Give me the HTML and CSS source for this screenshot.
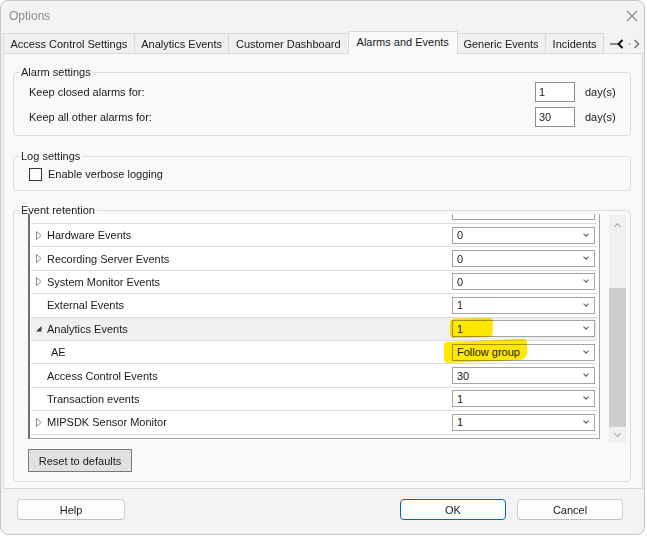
FILE: index.html
```html
<!DOCTYPE html>
<html lang="en">

<head>
    <meta charset="UTF-8">
    <title>Options</title>
    <link rel="stylesheet" href="styles.css">
</head>

<body>
    <div class="window">
        <div class="titlebar">
            <span class="title">Options</span>
            <svg class="close" width="12" height="12" viewBox="0 0 12 12">
                <path d="M1 1L11 11M11 1L1 11" stroke="#8a8a8a" stroke-width="1.1" fill="none" />
            </svg>
        </div>

        <div class="tabs">
            <div class="tab">Access Control Settings</div>
            <div class="tab">Analytics Events</div>
            <div class="tab">Customer Dashboard</div>
            <div class="tab active">Alarms and Events</div>
            <div class="tab">Generic Events</div>
            <div class="tab">Incidents</div>
            <div class="tab-scroll">
                <svg width="32" height="16" viewBox="0 0 32 16">
                    <path d="M1 8H11" stroke="#6a6a6a" stroke-width="1.5" />
                    <path d="M13.5 4L9.5 8L13.5 12" stroke="#111" stroke-width="2" fill="none" />
                    <circle cx="20.5" cy="8" r="0.8" fill="#888" />
                    <path d="M25.5 4L29.5 8L25.5 12" stroke="#777" stroke-width="1.6" fill="none" />
                </svg>
            </div>
        </div>

        <div class="tab-page">
            <fieldset class="group alarms">
                <legend>Alarm settings</legend>
                <div class="group-body">
                    <div class="field-row">
                        <span class="label">Keep closed alarms for:</span>
                        <input class="num" type="text" value="1">
                        <span class="unit">day(s)</span>
                    </div>
                    <div class="field-row">
                        <span class="label">Keep all other alarms for:</span>
                        <input class="num" type="text" value="30">
                        <span class="unit">day(s)</span>
                    </div>
                </div>
            </fieldset>

            <fieldset class="group log">
                <legend>Log settings</legend>
                <div class="group-body">
                    <label class="check"><span class="box"></span>Enable verbose logging</label>
                </div>
            </fieldset>

            <fieldset class="group retention">
                <legend>Event retention</legend>
                <div class="group-body">
                    <div class="grid-wrap">
                        <div class="grid">
                            <div class="rows">
                                <div class="row">
                                    <span class="name"></span>
                                    <div class="combo"></div>
                                </div>
                                <div class="row">
                                    <span class="name"><svg class="tri" width="6" height="9" viewBox="0 0 6 9"><path d="M0.5 0.5L5 4.5L0.5 8.5Z" fill="none" stroke="#8c8c8c" /></svg>Hardware Events</span>
                                    <div class="combo">0</div>
                                </div>
                                <div class="row">
                                    <span class="name"><svg class="tri" width="6" height="9" viewBox="0 0 6 9"><path d="M0.5 0.5L5 4.5L0.5 8.5Z" fill="none" stroke="#8c8c8c" /></svg>Recording Server Events</span>
                                    <div class="combo">0</div>
                                </div>
                                <div class="row">
                                    <span class="name"><svg class="tri" width="6" height="9" viewBox="0 0 6 9"><path d="M0.5 0.5L5 4.5L0.5 8.5Z" fill="none" stroke="#8c8c8c" /></svg>System Monitor Events</span>
                                    <div class="combo">0</div>
                                </div>
                                <div class="row">
                                    <span class="name">External Events</span>
                                    <div class="combo">1</div>
                                </div>
                                <div class="row expanded">
                                    <span class="name"><svg class="tri" width="6" height="9" viewBox="0 0 6 9"><path d="M5.5 2L5.5 7.5L0 7.5Z" fill="#3c3c3c" /></svg>Analytics Events</span>
                                    <div class="combo">1
                                        <svg class="marker m1" width="43" height="20" viewBox="0 0 43 20">
                                            <path d="M0 5Q0 1 5 0.5L39 0Q43 0 43 4L42.5 16Q42 19 38 19L4 20Q0 20 0 16Z" fill="#ffe800" />
                                        </svg>
                                    </div>
                                </div>
                                <div class="row">
                                    <span class="name sub">AE</span>
                                    <div class="combo">Follow group
                                        <svg class="marker m2" width="83" height="24" viewBox="0 0 83 24">
                                            <path d="M0 6Q0 3 4 3L79 0Q83 0 83 3L83 14Q82 20 76 21L4 24Q0 24 0 20Z" fill="#ffe800" />
                                        </svg>
                                    </div>
                                </div>
                                <div class="row">
                                    <span class="name">Access Control Events</span>
                                    <div class="combo">30</div>
                                </div>
                                <div class="row">
                                    <span class="name">Transaction events</span>
                                    <div class="combo">1</div>
                                </div>
                                <div class="row">
                                    <span class="name"><svg class="tri" width="6" height="9" viewBox="0 0 6 9"><path d="M0.5 0.5L5 4.5L0.5 8.5Z" fill="none" stroke="#8c8c8c" /></svg>MIPSDK Sensor Monitor</span>
                                    <div class="combo">1</div>
                                </div>
                            </div>
                        </div>

                        <div class="vscroll">
                            <div class="arrow up"></div>
                            <div class="track"><div class="thumb"></div></div>
                            <div class="arrow down"></div>
                        </div>
                    </div>
                    <button class="reset">Reset to defaults</button>
                </div>
            </fieldset>
        </div>

        <div class="footer">
            <button class="dlg">Help</button>
            <button class="dlg ok">OK</button>
            <button class="dlg">Cancel</button>
        </div>
    </div>
</body>

</html>
```

FILE: styles.css
```css
body {
    margin: 0;
    background-color: #fff;
    font-family: "Liberation Sans", Arial, sans-serif;
    font-size: 11px;
    color: #1a1a1a;
}

.window {
    width: 645px;
    height: 535px;
    box-sizing: border-box;
    border: 1px solid #c6c6c6;
    border-radius: 8px;
    background-color: #f3f3f3;
    overflow: hidden;
}

.titlebar {
    height: 30px;
    display: flex;
    align-items: center;
    padding-left: 8px;
}

.title {
    font-size: 12px;
    color: #8f8f8f;
}

.close {
    margin-left: auto;
    margin-right: 6px;
}

/* tab strip */
.tabs {
    height: 22px;
    display: flex;
    align-items: flex-end;
    padding-left: 2px;
    position: relative;
    z-index: 1;
}

.tab {
    height: 20px;
    box-sizing: border-box;
    padding: 1px 6.5px 0;
    border: 1px solid #d9d9d9;
    border-bottom: none;
    margin-right: -1px;
    background-color: #f0f0f0;
    display: flex;
    align-items: center;
    white-space: nowrap;
}

.tab:nth-child(3) {
    padding-right: 9px;
}

.tab.active {
    height: 23px;
    padding: 0 8px 2px;
    margin: 0 -2px -1px -2px;
    background-color: #f9f9f9;
    position: relative;
}

.tab-scroll {
    align-self: flex-start;
    margin: 5px 3px 0 auto;
    height: 16px;
}

.tab-page {
    height: 436px;
    box-sizing: border-box;
    margin: 0 1px 0 2px;
    padding: 0 11px 0 9px;
    border: 1px solid #d9d9d9;
    background-color: #f9f9f9;
}

/* group boxes */
.group {
    margin: 13px 0 0 0;
    padding: 0;
    min-width: 0;
    border: 1px solid #dcdcdc;
    border-radius: 4px;
}

.group legend {
    margin-left: 5px;
    padding: 0 2px;
    line-height: 13px;
}

.alarms {
    margin-top: 12px;
}

.log {
    margin-top: 14px;
}

.alarms .group-body {
    padding: 3px 10px 8px 15px;
}

.log .group-body {
    padding: 4px 0 9px 15px;
}

.retention .group-body {
    padding: 0 4px 9px 14px;
}

.field-row {
    display: flex;
    align-items: center;
    height: 20px;
    margin-bottom: 5px;
}

.field-row:last-child {
    margin-bottom: 0;
}

.field-row .label {
    flex: 1;
}

.num {
    width: 40px;
    height: 20px;
    box-sizing: border-box;
    padding: 0 3px;
    border: 1px solid #8e8e8e;
    font-family: inherit;
    font-size: 11px;
    color: #1a1a1a;
    outline: none;
}

.unit {
    width: 35px;
    margin-left: 10px;
}

.check {
    display: flex;
    align-items: center;
    height: 14px;
}

.check .box {
    width: 13px;
    height: 13px;
    box-sizing: border-box;
    border: 1px solid #333;
    background-color: #fcfcfc;
    margin-right: 6px;
}

/* event retention grid */
.grid-wrap {
    display: flex;
    align-items: flex-start;
    margin-top: -3px;
}

.grid {
    width: 572px;
    height: 225px;
    box-sizing: border-box;
    border-left: 2px solid #6f6f6f;
    border-right: 1px solid #a3a3a3;
    border-bottom: 1px solid #a3a3a3;
    background-color: #fff;
    overflow: hidden;
}

.rows {
    margin: -13.4px 2px 0 1px;
}

.row {
    height: 23.4px;
    box-sizing: border-box;
    border-bottom: 1px solid #dcdcdc;
    display: flex;
    align-items: center;
}

.row.expanded {
    background-color: #f0f0f0;
}

.name {
    flex: 1;
    display: flex;
    align-items: center;
    padding-left: 16px;
    white-space: nowrap;
}

.name.sub {
    padding-left: 20px;
}

.tri {
    margin-left: -11px;
    margin-right: 5px;
}

.combo {
    width: 143px;
    height: 17px;
    box-sizing: border-box;
    margin-right: 2px;
    padding-left: 4px;
    border: 1px solid #a3a3a3;
    background-color: #fff;
    display: flex;
    align-items: center;
    position: relative;
}

.combo:after {
    content: '';
    position: absolute;
    right: 6px;
    top: 4px;
    width: 3px;
    height: 3px;
    border-right: 1px solid #555;
    border-bottom: 1px solid #555;
    transform: rotate(45deg);
}

.marker {
    position: absolute;
    mix-blend-mode: multiply;
}

.m1 {
    left: -3px;
    top: -3px;
}

.m2 {
    left: -9px;
    top: -6px;
}

.vscroll {
    width: 17px;
    height: 228px;
    margin: 1px 0 0 9px;
    background-color: #f0f0f0;
    display: flex;
    flex-direction: column;
}

.vscroll .arrow {
    height: 16px;
    position: relative;
}

.vscroll .arrow:after {
    content: '';
    position: absolute;
    left: 6px;
    width: 4px;
    height: 4px;
    border-left: 1px solid #a0a0a0;
    border-top: 1px solid #a0a0a0;
}

.vscroll .up:after {
    top: 9px;
    transform: rotate(45deg);
}

.vscroll .down:after {
    top: 4px;
    transform: rotate(225deg);
}

.track {
    flex: 1;
    display: flex;
    flex-direction: column;
    justify-content: flex-end;
}

.thumb {
    height: 139px;
    background-color: #cdcdcd;
}

.reset {
    display: block;
    width: 104px;
    height: 23px;
    margin-top: 6px;
    border: 1px solid #7a7a7a;
    background-color: #e1e1e1;
    font-family: inherit;
    font-size: 11px;
    color: #1a1a1a;
    padding: 0;
}

/* dialog buttons */
.footer {
    display: flex;
    padding: 10px 21px 0 16px;
}

.dlg {
    height: 21px;
    width: 106px;
    padding: 0;
    border: 1px solid #d0d0d0;
    border-bottom-color: #bcbcbc;
    border-radius: 4px;
    background-color: #fdfdfd;
    font-family: inherit;
    font-size: 11px;
    color: #1a1a1a;
}

.dlg:first-child {
    width: 108px;
    margin-right: auto;
}

.dlg.ok {
    border-color: #0067c0;
    margin-right: 11px;
}
```
